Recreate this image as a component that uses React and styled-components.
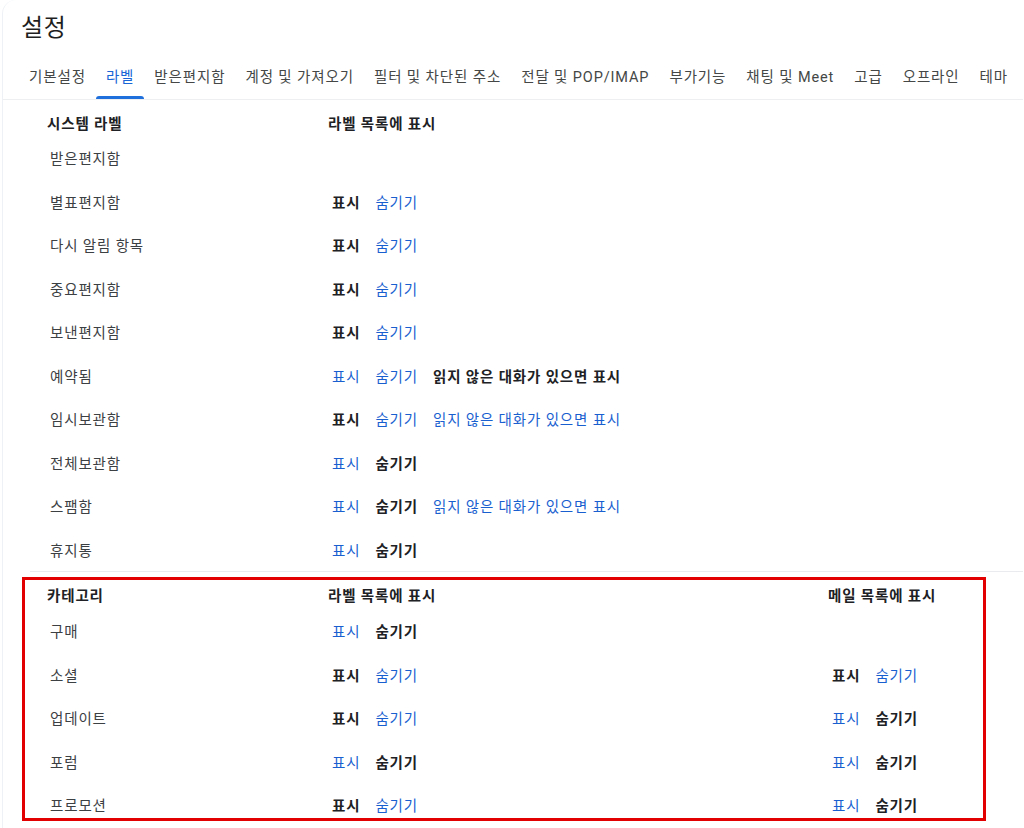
import React from "react";
import styled, { createGlobalStyle } from "styled-components";

const GlobalStyle = createGlobalStyle`
  html, body { margin: 0; padding: 0; background: #ffffff; }
  body {
    font-family: Roboto, "Noto Sans CJK KR", "Noto Sans", sans-serif;
    color: #202124;
    -webkit-font-smoothing: antialiased;
  }
`;

const Page = styled.div`
  width: 1021px;
  height: 828px;
  margin-left: 2px;
  border-left: 1px solid #eef1f5;
  border-top-left-radius: 14px;
  box-sizing: border-box;
  overflow: hidden;
  background: #fff;
`;

const Title = styled.h1`
  margin: 0;
  padding: 14px 0 10px 18px;
  font-size: 24px;
  letter-spacing: 0.6px;
  line-height: 28px;
  font-weight: 400;
  color: #1f1f1f;
`;

const TabBar = styled.nav`
  display: flex;
  height: 47px;
  padding-left: 16px;
  border-bottom: 1px solid #edeff1;
  white-space: nowrap;
  overflow: hidden;
`;

const Tab = styled.div`
  position: relative;
  display: flex;
  align-items: center;
  padding: 0 10px;
  font-size: 14.5px;
  letter-spacing: 0.88px;
  color: ${(p) => (p.$active ? "#1a66d6" : "#444746")};
  font-weight: 400;

  &::after {
    content: "";
    display: ${(p) => (p.$active ? "block" : "none")};
    position: absolute;
    left: 0;
    right: 0;
    bottom: 0;
    height: 3px;
    border-radius: 3px 3px 0 0;
    background: #1f6fdc;
  }
`;

const Section = styled.section`
  padding: 8px 0 0 44px;
`;

const Divider = styled.div`
  margin-left: 27px;
  height: 1px;
  background: #e9ebee;
`;

const CategoryBox = styled.section`
  margin: 5px 0 0 19px;
  width: 964px;
  height: 244px;
  box-sizing: border-box;
  border: 3px solid #e20000;
  padding-left: 22px;
  overflow: hidden;
`;

const Row = styled.div`
  display: grid;
  grid-template-columns: 281px 500px 1fr;
  align-items: center;
  height: ${(p) => (p.$header ? p.$h || "28px" : "43.5px")};
  font-size: 14.5px;
  letter-spacing: 0.85px;
`;

const HeadCell = styled.div`
  font-weight: 700;
  color: #202124;
`;

const NameCell = styled.div`
  padding-left: 3px;
  color: #3c4043;
`;

const Actions = styled.div`
  display: flex;
  gap: 15px;
  padding-left: 4px;
`;

const Option = styled.span`
  color: ${(p) => (p.$on ? "#202124" : "#1a5fd0")};
  font-weight: ${(p) => (p.$on ? 700 : 400)};
  cursor: ${(p) => (p.$on ? "default" : "pointer")};
`;

const tabs = [
  "기본설정",
  "라벨",
  "받은편지함",
  "계정 및 가져오기",
  "필터 및 차단된 주소",
  "전달 및 POP/IMAP",
  "부가기능",
  "채팅 및 Meet",
  "고급",
  "오프라인",
  "테마",
];

const UNREAD = "읽지 않은 대화가 있으면 표시";

// state: "show" | "hide" | "unread"
const systemRows = [
  { name: "받은편지함", state: null },
  { name: "별표편지함", state: "show" },
  { name: "다시 알림 항목", state: "show" },
  { name: "중요편지함", state: "show" },
  { name: "보낸편지함", state: "show" },
  { name: "예약됨", state: "unread", unread: true },
  { name: "임시보관함", state: "show", unread: true },
  { name: "전체보관함", state: "hide" },
  { name: "스팸함", state: "hide", unread: true },
  { name: "휴지통", state: "hide" },
];

const categoryRows = [
  { name: "구매", label: "hide", mail: null },
  { name: "소셜", label: "show", mail: "show" },
  { name: "업데이트", label: "show", mail: "hide" },
  { name: "포럼", label: "hide", mail: "hide" },
  { name: "프로모션", label: "show", mail: "hide" },
];

function Choices({ state, unread }) {
  if (!state) return <Actions />;
  return (
    <Actions>
      <Option $on={state === "show"}>표시</Option>
      <Option $on={state === "hide"}>숨기기</Option>
      {unread && <Option $on={state === "unread"}>{UNREAD}</Option>}
    </Actions>
  );
}

export default function App() {
  return (
    <>
      <GlobalStyle />
      <Page>
        <Title>설정</Title>
        <TabBar>
          {tabs.map((t) => (
            <Tab key={t} $active={t === "라벨"}>
              {t}
            </Tab>
          ))}
        </TabBar>

        <Section>
          <Row $header>
            <HeadCell>시스템 라벨</HeadCell>
            <HeadCell>라벨 목록에 표시</HeadCell>
            <div />
          </Row>
          {systemRows.map((r) => (
            <Row key={r.name}>
              <NameCell>{r.name}</NameCell>
              <Choices state={r.state} unread={r.unread} />
              <div />
            </Row>
          ))}
        </Section>
        <Divider />

        <CategoryBox>
          <Row $header $h="29px">
            <HeadCell>카테고리</HeadCell>
            <HeadCell>라벨 목록에 표시</HeadCell>
            <HeadCell>메일 목록에 표시</HeadCell>
          </Row>
          {categoryRows.map((r) => (
            <Row key={r.name}>
              <NameCell>{r.name}</NameCell>
              <Choices state={r.label} />
              <Choices state={r.mail} />
            </Row>
          ))}
        </CategoryBox>
      </Page>
    </>
  );
}
